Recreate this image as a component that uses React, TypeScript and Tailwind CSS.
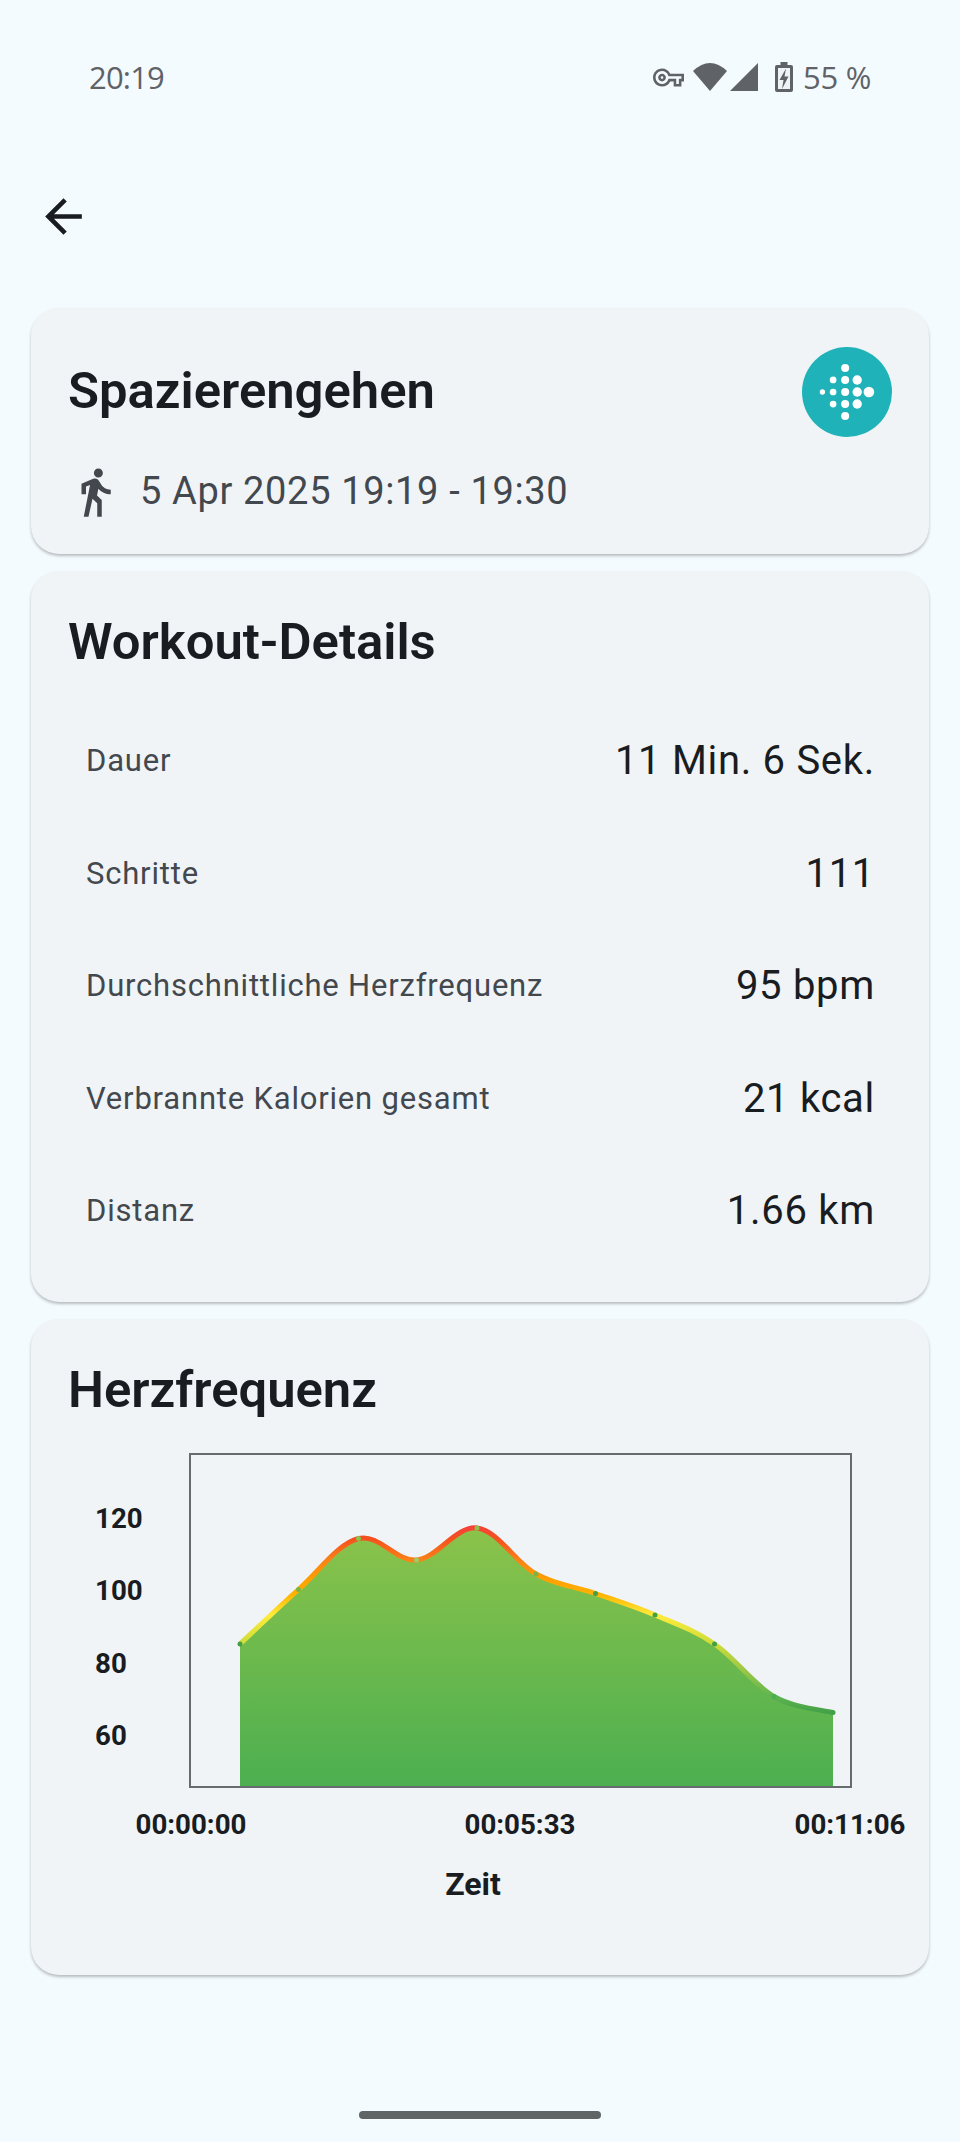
import React from 'react';
import { MdArrowBack, MdDirectionsWalk, MdOutlineVpnKey } from 'react-icons/md';

const details = [
  { label: 'Dauer', value: '11 Min. 6 Sek.' },
  { label: 'Schritte', value: '111' },
  { label: 'Durchschnittliche Herzfrequenz', value: '95 bpm' },
  { label: 'Verbrannte Kalorien gesamt', value: '21 kcal' },
  { label: 'Distanz', value: '1.66 km' },
];

// heart rate samples in page pixels, the chart svg uses the same coordinates
const points: [number, number, string][] = [
  [240, 1644, '#43a047'],
  [298.5, 1589.5, '#7cb342'],
  [358.5, 1538.5, '#8bc34a'],
  [416.5, 1560, '#9ccc65'],
  [477, 1528, '#8bc34a'],
  [536, 1574, '#7cb342'],
  [595.5, 1593.5, '#43a047'],
  [655, 1615, '#43a047'],
  [714.5, 1644, '#43a047'],
  [774, 1696.5, '#4caf50'],
  [833, 1712.5, '#43a047'],
];

const smoothPath = () => {
  const k = 0.175;
  let d = `M${points[0][0]} ${points[0][1]}`;
  for (let i = 1; i < points.length; i++) {
    const p0 = points[Math.max(i - 2, 0)];
    const p1 = points[i - 1];
    const p2 = points[i];
    const p3 = points[Math.min(i + 1, points.length - 1)];
    const c1x = p1[0] + (p2[0] - p0[0]) * k;
    const c1y = p1[1] + (p2[1] - p0[1]) * k;
    const c2x = p2[0] - (p3[0] - p1[0]) * k;
    const c2y = p2[1] - (p3[1] - p1[1]) * k;
    d += ` C${c1x} ${c1y} ${c2x} ${c2y} ${p2[0]} ${p2[1]}`;
  }
  return d;
};

const FitbitBadge = () => {
  const dots = [
    [197, 112, 12],
    [161, 148, 10],
    [197, 148, 12],
    [233, 148, 14],
    [129, 184, 8],
    [161, 184, 10],
    [197, 184, 12],
    [233, 184, 14],
    [268, 184, 16],
    [161, 220, 10],
    [197, 220, 12],
    [233, 220, 14],
    [197, 256, 12],
  ];
  return (
    <svg width="90" height="90" viewBox="68 49.5 269 269" className="shrink-0">
      <circle cx="202.5" cy="184" r="134.5" fill="#1fb2b8" />
      {dots.map(([x, y, r]) => (
        <circle key={`${x}-${y}`} cx={x} cy={y} r={r} fill="#ffffff" />
      ))}
    </svg>
  );
};

const StatusBar = () => (
  <div className="h-[154px] flex items-center justify-between pl-[89px] pr-[89px] text-[#5f6368] font-['Open_Sans',sans-serif] font-medium">
    <span className="text-[31px] tracking-[-0.8px]">20:19</span>
    <div className="flex items-center">
      <MdOutlineVpnKey size={31} className="text-[#5f6368]" />
      <svg width="34" height="28" viewBox="0 0 34 28" className="ml-[9px]">
        <path d="M0 8Q17 -8 34 8L17 28Z" fill="#5f6368" />
      </svg>
      <svg width="28" height="28" viewBox="0 0 28 28" className="ml-[3px]">
        <path d="M28 0V28H0Z" fill="#5f6368" />
      </svg>
      <svg width="18" height="30" viewBox="0 0 18 30" className="ml-[17px]">
        <path d="M5.5 0H12.5V3H16Q18 3 18 5V28Q18 30 16 30H2Q0 30 0 28V5Q0 3 2 3H5.5Z" fill="#5f6368" />
        <rect x="3" y="6" width="12" height="21" fill="#eef3f5" />
        <path d="M11 6.5L4.5 18H8.5L7 27L13.5 14.5H9.5Z" fill="#5f6368" />
      </svg>
      <span className="ml-[10px] text-[31px] tracking-[-0.3px]">55 %</span>
    </div>
  </div>
);

export default function App() {
  return (
    <div className="relative w-[960px] h-[2142px] bg-[#f4fbfe] font-['Roboto',sans-serif] text-[#191c20] overflow-hidden">
      <StatusBar />

      <div className="h-[124px] flex items-center pl-[36px]">
        <MdArrowBack size={55} className="text-[#191c20]" />
      </div>

      <div className="mt-[30px] mx-[31px] flex flex-col gap-[17px]">
        <div className="h-[246px] rounded-[28px] bg-[#f0f4f7] shadow-[0_2px_3px_rgba(0,0,0,0.25)] px-[37px] pt-[39px]">
          <div className="h-[90px] flex items-center justify-between">
            <h1 className="text-[50.8px] font-semibold mb-[2px]">Spazierengehen</h1>
            <FitbitBadge />
          </div>
          <div className="mt-[26px] flex items-center gap-[18px] text-[#43484e]">
            <MdDirectionsWalk size={54} className="shrink-0" />
            <span className="text-[38px] tracking-[0.65px]">5 Apr 2025 19:19 - 19:30</span>
          </div>
        </div>

        <div className="h-[731px] rounded-[28px] bg-[#f0f4f7] shadow-[0_2px_3px_rgba(0,0,0,0.25)] pt-[40px]">
          <h2 className="px-[37px] h-[62px] flex items-center text-[50.8px] font-semibold">Workout-Details</h2>
          <div className="mt-[32px] pl-[55px] pr-[54px]">
            {details.map((row) => (
              <div key={row.label} className="h-[112.5px] flex items-center justify-between">
                <span className="text-[31px] tracking-[0.8px] text-[#43484e]">{row.label}</span>
                <span className="text-[40px] tracking-[0.7px]">{row.value}</span>
              </div>
            ))}
          </div>
        </div>

        <div className="h-[656px] rounded-[28px] bg-[#f0f4f7] shadow-[0_2px_3px_rgba(0,0,0,0.25)] pt-[40px]">
          <h2 className="px-[37px] h-[62px] flex items-center text-[50.8px] font-semibold">Herzfrequenz</h2>
          <svg width="898" height="480" viewBox="31 1440 898 480" className="mt-[19px] block">
            <defs>
              <linearGradient id="area" gradientUnits="userSpaceOnUse" x1="0" y1="1528" x2="0" y2="1787">
                <stop offset="0" stopColor="#8bc34a" />
                <stop offset="1" stopColor="#4caf50" />
              </linearGradient>
              <linearGradient id="line" gradientUnits="userSpaceOnUse" x1="0" y1="1528" x2="0" y2="1713">
                <stop offset="0" stopColor="#f44336" />
                <stop offset="0.06" stopColor="#f4511e" />
                <stop offset="0.17" stopColor="#fb8017" />
                <stop offset="0.28" stopColor="#ffa000" />
                <stop offset="0.36" stopColor="#ffb300" />
                <stop offset="0.47" stopColor="#ffeb3b" />
                <stop offset="0.63" stopColor="#cddc39" />
                <stop offset="0.77" stopColor="#9bc745" />
                <stop offset="0.91" stopColor="#5fb550" />
                <stop offset="1" stopColor="#43a047" />
              </linearGradient>
            </defs>
            <path d={`${smoothPath()} L833 1787 L240 1787 Z`} fill="url(#area)" />
            <path d={smoothPath()} fill="none" stroke="url(#line)" strokeWidth="5" />
            {points.map(([x, y, c]) => (
              <circle key={x} cx={x} cy={y} r="2.5" fill={c} />
            ))}
            <rect x="190" y="1454" width="661" height="333" fill="none" stroke="#666b6e" strokeWidth="2" />
            <g className="font-['Roboto',sans-serif] font-bold" fontSize="27.7" fill="#191c20">
              <text x="95" y="1528">120</text>
              <text x="95" y="1600">100</text>
              <text x="95" y="1673">80</text>
              <text x="95" y="1745">60</text>
              <text x="191" y="1834" textAnchor="middle">00:00:00</text>
              <text x="520" y="1834" textAnchor="middle">00:05:33</text>
              <text x="850" y="1834" textAnchor="middle">00:11:06</text>
              <text x="473" y="1895" textAnchor="middle" fontSize="32">Zeit</text>
            </g>
          </svg>
        </div>
      </div>

      <div className="absolute bottom-[23px] left-[359px] w-[242px] h-[8px] rounded-full bg-[#5f6464]" />
    </div>
  );
}
